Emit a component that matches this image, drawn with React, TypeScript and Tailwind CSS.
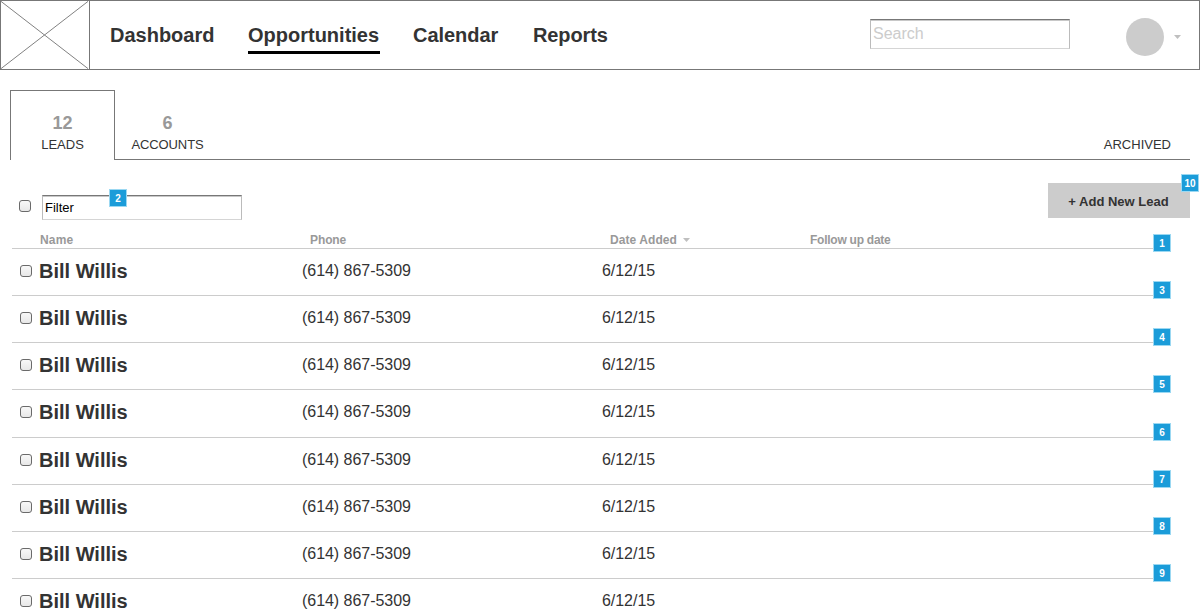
import React from "react";

type Lead = { name: string; phone: string; added: string; tall?: boolean; badge?: number };

const person = { name: "Bill Willis", phone: "(614) 867-5309", added: "6/12/15" };

const leads: Lead[] = [
  { ...person, badge: 3 },
  { ...person, badge: 4 },
  { ...person, badge: 5 },
  { ...person, badge: 6, tall: true },
  { ...person, badge: 7 },
  { ...person, badge: 8 },
  { ...person, badge: 9 },
  { ...person },
];

const navItems = [
  { label: "Dashboard", width: "w-[104px]" },
  { label: "Opportunities", width: "w-[132px]", active: true },
  { label: "Calendar", width: "w-[86px] -ml-px tracking-[-0.05px]" },
  { label: "Reports", width: "w-[80px] tracking-[-0.1px]" },
];

function Marker({ n, className }: { n: number; className: string }) {
  return (
    <span
      className={`absolute z-10 flex h-[18px] w-[18px] items-center justify-center border border-[#9bd8f2] bg-[#1b9cd9] pt-0.5 text-[10px] leading-none font-bold text-white ${className}`}
    >
      {n}
    </span>
  );
}

function Checkbox() {
  return (
    <input
      type="checkbox"
      className="block h-3 w-3 shrink-0 appearance-none rounded-[3px] border border-[#6a6a6a] bg-linear-to-b from-[#f8f8f8] to-[#e8e8e8]"
    />
  );
}

function Caret({ className }: { className: string }) {
  return (
    <svg width="7" height="4" viewBox="0 0 7 4" className={`shrink-0 ${className}`}>
      <path d="M0 0H7L3.5 4Z" fill="#bfbfbf" />
    </svg>
  );
}

const field =
  "block shrink-0 border border-t-[#777] border-x-[#bbb] border-b-[#d5d5d5] bg-white outline-none shadow-[inset_0_1px_0_#c8c8c8]";

function Header() {
  return (
    <header className="flex h-[70px] border border-[#777]">
      <svg width="89" height="68" viewBox="0 0 89 68" className="shrink-0 border-r border-[#777]">
        <path d="M0 0L88 68M88 0L0 68" stroke="#808080" strokeWidth="1" fill="none" />
      </svg>
      <nav className="ml-5 flex flex-1 gap-[34px] pt-[22px] text-xl leading-6 font-bold whitespace-nowrap">
        {navItems.map((item) => (
          <a
            key={item.label}
            className={`h-[31px] ${item.width} ${item.active ? "border-b-[3px] border-black" : ""}`}
          >
            {item.label}
          </a>
        ))}
      </nav>
      <input
        placeholder="Search"
        className={`mt-[18px] h-[30px] w-[200px] pb-px pl-0.5 text-base placeholder:text-[#ccc] ${field}`}
      />
      <div className="mt-[17px] mr-[18px] ml-14 flex h-[38px] items-center">
        <span className="h-[38px] w-[38px] rounded-full bg-[#ccc]" />
        <Caret className="ml-[10px]" />
      </div>
    </header>
  );
}

function Tabs() {
  const tab = "flex h-[70px] w-[105px] flex-col items-center text-[13px] leading-4";
  const count = "mb-0.5 text-lg leading-6 text-[#999]";
  return (
    <div className="mx-[10px] mt-5 flex h-[70px]">
      <div className={`${tab} border border-b-0 border-[#777] pt-5`}>
        <b className={count}>12</b>
        LEADS
      </div>
      <div className="flex flex-1 justify-between border-b border-[#777]">
        <div className={`${tab} pt-[21px]`}>
          <b className={count}>6</b>
          <span className="tracking-[-0.1px]">ACCOUNTS</span>
        </div>
        <div className="mr-[19px] pt-[47px] text-[13px] leading-4">ARCHIVED</div>
      </div>
    </div>
  );
}

export default function App() {
  return (
    <div className="h-[613px] w-[1200px] overflow-hidden bg-white font-['Liberation_Sans',Arial,sans-serif] text-[#333]">
      <Header />
      <Tabs />
      <div className="mt-[23px] flex h-[49px] pr-[10px] pl-[19px]">
        <div className="pt-[17px]">
          <Checkbox />
        </div>
        <div className="relative mt-3 ml-[11px] h-[25px]">
          <input
            defaultValue="Filter"
            className={`h-[25px] w-[200px] pl-0.5 text-[13px] text-black ${field}`}
          />
          <Marker n={2} className="top-[-6px] left-[67px]" />
        </div>
        <div className="relative ml-auto h-[35px]">
          <button className="block h-[35px] w-[142px] bg-[#ccc] pt-0.5 pr-px text-[13px] font-bold">
            + Add New Lead
          </button>
          <Marker n={10} className="top-[-9px] left-[133px]" />
        </div>
      </div>
      <div className="relative ml-3 flex h-[17px] w-[1150px] border-b border-[#ccc] pl-7 text-xs leading-4 font-bold text-[#999]">
        <div className="w-[270px] tracking-[0.2px]">Name</div>
        <div className="w-[300px] tracking-[-0.1px]">Phone</div>
        <div className="flex w-[200px] items-center tracking-[0.08px]">
          Date Added
          <Caret className="ml-[6px]" />
        </div>
        <div className="tracking-[-0.25px]">Follow up date</div>
        <Marker n={1} className="top-[2px] left-[1141px]" />
      </div>
      {leads.map((lead, i) => (
        <div
          key={i}
          className={`relative ml-3 flex w-[1150px] border-b border-[#ccc] pl-2 ${lead.tall ? "h-12" : "h-[47px]"}`}
        >
          <div className="pt-4">
            <Checkbox />
          </div>
          <div className="w-[270px] pt-[10px] pl-[7px] text-xl leading-6 font-bold">{lead.name}</div>
          <div className="w-[300px] pt-[10px] text-base leading-6 tracking-[-0.04px]">{lead.phone}</div>
          <div className="pt-[10px] text-base leading-6 tracking-[-0.04px]">{lead.added}</div>
          {lead.badge && (
            <Marker
              n={lead.badge}
              className={`left-[1141px] ${lead.tall ? "top-[33px]" : "top-8"}`}
            />
          )}
        </div>
      ))}
    </div>
  );
}
